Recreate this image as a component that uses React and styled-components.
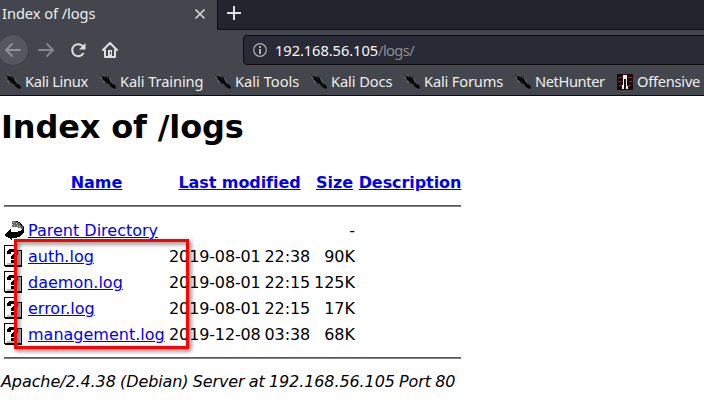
import React from 'react';
import styled, { createGlobalStyle } from 'styled-components';

const Global = createGlobalStyle`
  * { box-sizing: border-box; }
  html, body { margin: 0; background: #fff; overflow: hidden; }
`;
const Window = styled.div`
  position: relative;
  width: 704px;
  height: 415px;
  overflow: hidden;
  background: #fff;
  color: #000;
  font-family: 'DejaVu Sans', sans-serif;
  font-size: 16px;
`;
const Chrome = styled.header`
  height: 96px;
  background: #43464d;
  border-bottom: 1px solid #0c0c0d;
  font-family: 'Noto Sans', sans-serif;
  font-size: 14.67px;
  color: #eeeeec;
`;
const TabBar = styled.div`
  display: flex;
  height: 30px;
  background: #23252e;
`;
const Tab = styled.div`
  display: flex;
  align-items: center;
  justify-content: space-between;
  width: 217px;
  height: 30px;
  padding: 0 11px 2px 2px;
  background: #43464d;
`;
const TabTitle = styled.span`
  display: block;
  margin-top: -2px;
  white-space: nowrap;
  letter-spacing: -0.07px;
`;
const NewTab = styled.div`
  flex: 1;
  border-left: 1px solid #0c0c0d;
  border-bottom: 1px solid #111218;
  padding: 6px 0 0 9px;
  line-height: 0;
`;
const NavBar = styled.div`
  display: flex;
  align-items: center;
  height: 40px;
`;
const NavButton = styled.div`
  display: flex;
  align-items: center;
  justify-content: center;
  width: 32px;
  height: 32px;
  flex: none;
  margin-left: ${p => p.$gap || 0}px;
  border-radius: 50%;
  background: ${p => (p.$round ? '#56575e' : 'transparent')};
  box-shadow: ${p => (p.$round ? '0 0 0 1px #3b3d44 inset' : 'none')};
`;
const UrlBar = styled.div`
  display: flex;
  align-items: center;
  flex: none;
  width: 480px;
  height: 30px;
  margin-left: 117px;
  padding-left: 9px;
  border: 1px solid #0c0c0d;
  border-radius: 4px;
  background: #282a35;
  color: #f9f9fa;
`;
const Address = styled.span`
  margin-left: 8px;
  white-space: nowrap;
  letter-spacing: -0.07px;
`;
const UrlPath = styled.span`
  color: #8d8e94;
  letter-spacing: -0.6px;
`;
const Bookmarks = styled.nav`
  display: grid;
  grid-template-columns: 95px 115px 96px 93px 111px 102px 90px;
  align-items: center;
  height: 24px;
  padding-left: 5px;
`;
const Bookmark = styled.span`
  display: flex;
  align-items: center;
  gap: 4px;
  white-space: nowrap;
  letter-spacing: ${p => p.$ls || 0}px;
  svg { flex: none; }
`;
const BookmarkLabel = styled.span`
  margin-top: -2px;
`;
const Page = styled.main`
  padding: 10px 0 0 1px;
`;
const Title = styled.h1`
  margin: 0;
  height: 42px;
  font-size: 32px;
  line-height: 42px;
  white-space: nowrap;
  letter-spacing: -0.15px;
`;
const Listing = styled.div`
  display: grid;
  width: 457px;
  margin: 22px 0 0 3px;
`;
const Row = styled.div`
  display: grid;
  grid-template-columns: 20px 137px 141px 41px 102px;
  column-gap: 4px;
  height: 26px;
  line-height: 26px;
  white-space: nowrap;
  font-weight: ${p => (p.$head ? 700 : 400)};
  svg { margin-top: 1px; }
`;
const Cell = styled.span`
  display: flex;
  justify-content: ${p => p.$align || 'flex-start'};
  letter-spacing: ${p => p.$ls || 0}px;
  word-spacing: ${p => p.$ws || 0}px;
`;
const Link = styled.a`
  color: #0000ee;
  text-decoration: underline;
`;
const Rule = styled.div`
  width: 457px;
  height: 2px;
  margin: ${p => p.$margin};
  background: #5a5a5a;
  border-bottom: 1px solid #808080;
`;
const Signature = styled.address`
  margin-top: 13px;
  line-height: 19px;
  white-space: nowrap;
  letter-spacing: -0.09px;
  word-spacing: -0.8px;
`;
const Highlight = styled.div`
  position: absolute;
  left: 14px;
  top: 239px;
  width: 175px;
  height: 110px;
  border: 3px solid #fe0000;
  filter: drop-shadow(2px 2px 2px rgba(0, 0, 0, 0.6));
`;

const Dragon = () => (
  <svg width="16" height="16" viewBox="0 0 16 16">
    <path d="M0 0l4 2h3l2 2 1 3 2 3 3 1 1 3-1 1-4-2-2-3-3-1-2-3-2-1 1-1z" fill="#050505" />
    <path d="M1 .8l5 1.7 2 1.6M0 3l2 2M2 7l3 2M9.5 4l2 4" stroke="#808287" strokeWidth=".6" fill="none" />
  </svg>
);
const OffSec = () => (
  <svg width="16" height="16" viewBox="0 0 16 16" shapeRendering="crispEdges">
    <path d="M0 0h16v16H0z" fill="#240507" />
    <path d="M1 3.5h4M11 3.5h4M1 7.5h3M12 7.5h3M2 11.5h3M11 11.5h3" stroke="#6b3c3f" />
    <path d="M6 1h4v7l1 7H9V6H7v9H5l1-7z" fill="#eee" />
    <path d="M7 5h2v11H7z" fill="#111" />
  </svg>
);
const BackIcon = () => (
  <svg width="20" height="22" viewBox="0 0 20 22" shapeRendering="crispEdges">
    <path d="M8 2h4l5 2 3 4v3l-4-2-4-1H8z" fill="#666" />
    <path d="M9 3.5h1M12 4.5h1M10 6.5h1M13 6.5h1M15 7.5h1M8 5.5h1" stroke="#ccc" />
    <path d="M12 2l4 2 3 4" stroke="#111" fill="none" />
    <path d="M0 16l7-6v3h6l5-2 2-4v6l-3 4-5 2H8v2z" fill="#000" />
  </svg>
);
const UnknownIcon = () => (
  <svg width="20" height="22" viewBox="0 0 20 22" shapeRendering="crispEdges">
    <path d="M.5.5h12l5 5v15H.5z" fill="#fff" stroke="#000" />
    <path d="M13 6h4v14h-4zM3 18h11v2H3z" fill="#bbb" />
    <path d="M12.5.5v5h5" fill="#fff" stroke="#000" />
    <path d="M3 6l3-2h5l3 2v4l-3 2v2H7v-3l3-2V7H7v2H3zM7 15h4v3H7z" fill="#000" />
    <path d="M17.5 6v15H1" fill="none" stroke="#000" />
  </svg>
);

const marks = [
  ['Kali Linux', -0.3], ['Kali Training', -0.1], ['Kali Tools', 0], ['Kali Docs', -0.1],
  ['Kali Forums', -0.17], ['NetHunter', -0.4], ['Offensive', -0.25],
];
const files = [
  ['auth.log', '2019-08-01 22:38', '90K'],
  ['daemon.log', '2019-08-01 22:15', '125K'],
  ['error.log', '2019-08-01 22:15', '17K'],
  ['management.log', '2019-12-08 03:38', '68K'],
];

export default function App() {
  return (
    <Window>
      <Global />
      <Chrome>
        <TabBar>
          <Tab>
            <TabTitle>Index of /logs</TabTitle>
            <svg width="12" height="12" viewBox="0 0 12 12"><path d="M1.5 1.5l9 9m0-9l-9 9" stroke="#d8d8d6" strokeWidth="1.6" /></svg>
          </Tab>
          <NewTab>
            <svg width="14" height="14" viewBox="0 0 14 14"><path d="M7 0v14M0 7h14" stroke="#e0e0de" strokeWidth="2" /></svg>
          </NewTab>
        </TabBar>
        <NavBar>
          <NavButton $round $gap={-3}>
            <svg width="16" height="16" viewBox="0 0 16 16" fill="none" stroke="#929397" strokeWidth="1.8" strokeLinecap="round" strokeLinejoin="round"><path d="M15 8H1M7 2L1 8l6 6" /></svg>
          </NavButton>
          <NavButton $gap={1}>
            <svg width="16" height="16" viewBox="0 0 16 16" fill="none" stroke="#85878a" strokeWidth="1.8" strokeLinecap="round" strokeLinejoin="round"><path d="M1 8h14M9 2l6 6-6 6" /></svg>
          </NavButton>
          <NavButton>
            <svg width="16" height="16" viewBox="0 0 16 16" fill="none" stroke="#dededc" strokeWidth="2"><path d="M13 4.5A6 6 0 1 0 13.5 11" /><path d="M15.5 1v6.5H9z" fill="#dededc" stroke="none" /></svg>
          </NavButton>
          <NavButton>
            <svg width="16" height="16" viewBox="0 0 16 16" fill="none" stroke="#dededc" strokeWidth="2" strokeLinejoin="round" strokeLinecap="round"><path d="M1 8l7-7 7 7M3 8v7h10V8" /><path d="M6 8h4v6H6z" fill="#dededc" stroke="none" /><path d="M8.5 10v2" stroke="#43464d" strokeWidth="1" /></svg>
          </NavButton>
          <UrlBar>
            <svg width="14" height="14" viewBox="0 0 14 14"><circle cx="7" cy="7" r="6.3" fill="none" stroke="#b0b1b5" strokeWidth="1.2" /><path d="M7 3v2M7 6v5" stroke="#b0b1b5" strokeWidth="2" /></svg>
            <Address>192.168.56.105<UrlPath>/logs/</UrlPath></Address>
          </UrlBar>
        </NavBar>
        <Bookmarks>
          {marks.map(([name, ls], i) => (
            <Bookmark key={name} $ls={ls}>{i === 6 ? <OffSec /> : <Dragon />}<BookmarkLabel>{name}</BookmarkLabel></Bookmark>
          ))}
        </Bookmarks>
      </Chrome>
      <Page>
        <Title>Index of /logs</Title>
        <Listing>
          <Row $head>
            <span />
            <Cell $align="center"><Link>Name</Link></Cell>
            <Cell $align="center" $ls={-0.07}><Link>Last modified</Link></Cell>
            <Cell $align="center"><Link>Size</Link></Cell>
            <Cell $align="center" $ls={-0.07}><Link>Description</Link></Cell>
          </Row>
          <Rule $margin="9px 0 11px" />
          <Row><BackIcon /><Cell><Link>Parent Directory</Link></Cell><span /><Cell $align="flex-end">-</Cell></Row>
          {files.map(([name, date, size]) => (
            <Row key={name}>
              <UnknownIcon />
              <Cell><Link>{name}</Link></Cell>
              <Cell $align="flex-end" $ls={-0.14} $ws={-1}>{date}</Cell>
              <Cell $align="flex-end">{size}</Cell>
            </Row>
          ))}
          <Rule $margin="9px 0 0" />
        </Listing>
        <Signature>Apache/2.4.38 (Debian) Server at 192.168.56.105 Port 80</Signature>
      </Page>
      <Highlight />
    </Window>
  );
}
